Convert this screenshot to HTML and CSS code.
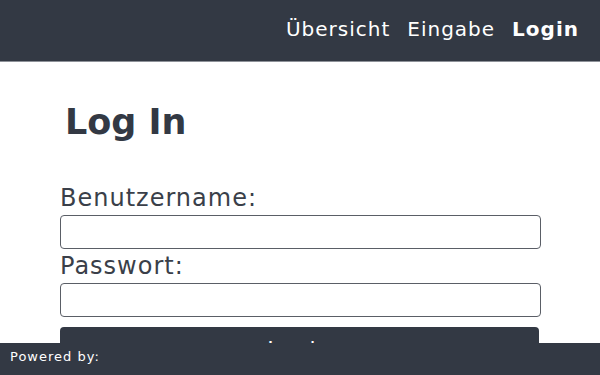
FILE: index.html
```html
<!DOCTYPE html>
<html lang="de">
<head>
<meta charset="utf-8">
<title>Log In</title>
<link rel="stylesheet" href="styles.css">
</head>
<body>
<header class="topbar">
  <nav class="nav">
    <a class="nav-link" href="#">Übersicht</a>
    <a class="nav-link" href="#">Eingabe</a>
    <a class="nav-link active" href="#">Login</a>
  </nav>
</header>
<main class="main">
  <h1 class="title">Log In</h1>
  <form class="form">
    <label class="label" for="user">Benutzername:</label>
    <input class="field" id="user" type="text">
    <label class="label" for="pass">Passwort:</label>
    <input class="field" id="pass" type="password">
    <button class="submit" type="button">Login</button>
  </form>
</main>
<footer class="footer">Powered by:</footer>
</body>
</html>
```
FILE: styles.css
```css
html, body {
  margin: 0;
  padding: 0;
  background: #ffffff;
  font-family: "DejaVu Sans", sans-serif;
}
.topbar {
  background: #333944;
  border-bottom: 1px solid #8d9198;
  display: flex;
  justify-content: flex-end;
  align-items: flex-start;
  padding: 18px 21px 0 0;
  box-sizing: content-box;
  height: 43px;
}
.nav {
  display: flex;
  gap: 17px;
}
.nav-link {
  color: #ffffff;
  text-decoration: none;
  font-size: 20px;
  letter-spacing: 1px;
  line-height: 23px;
}
.nav-link.active {
  font-weight: bold;
}
.main {
  width: 481px;
  margin: 0 auto 0 60px;
}
.title {
  margin: 40px 0 0 0;
  padding-left: 5px;
  font-size: 35px;
  font-weight: bold;
  color: #333944;
  line-height: 41px;
}
.form {
  display: flex;
  flex-direction: column;
  margin-top: 41px;
}
.label {
  font-size: 24px;
  letter-spacing: 1px;
  line-height: 28px;
  color: #3a3f49;
  margin-bottom: 3px;
}
.field {
  height: 34px;
  box-sizing: border-box;
  border: 1px solid #5a5e66;
  border-radius: 4px;
  margin: 0 0 3px 0;
  padding: 0 8px;
  font-size: 16px;
  width: 481px;
}
.submit {
  margin-top: 7px;
  width: 479px;
  height: 44px;
  padding: 10px 0 8px 0;
  background: #333944;
  color: #ffffff;
  border: none;
  border-radius: 4px;
  font-family: "DejaVu Sans", sans-serif;
  font-size: 22px;
  line-height: 26px;
  letter-spacing: 1px;
  display: flex;
  justify-content: center;
  align-items: flex-start;
}
.footer {
  position: fixed;
  left: 0;
  right: 0;
  bottom: 0;
  height: 32px;
  box-sizing: border-box;
  padding: 6px 10px 0 10px;
  background: #333944;
  color: #ffffff;
  font-size: 13px;
  letter-spacing: 1px;
  line-height: 16px;
}
```
